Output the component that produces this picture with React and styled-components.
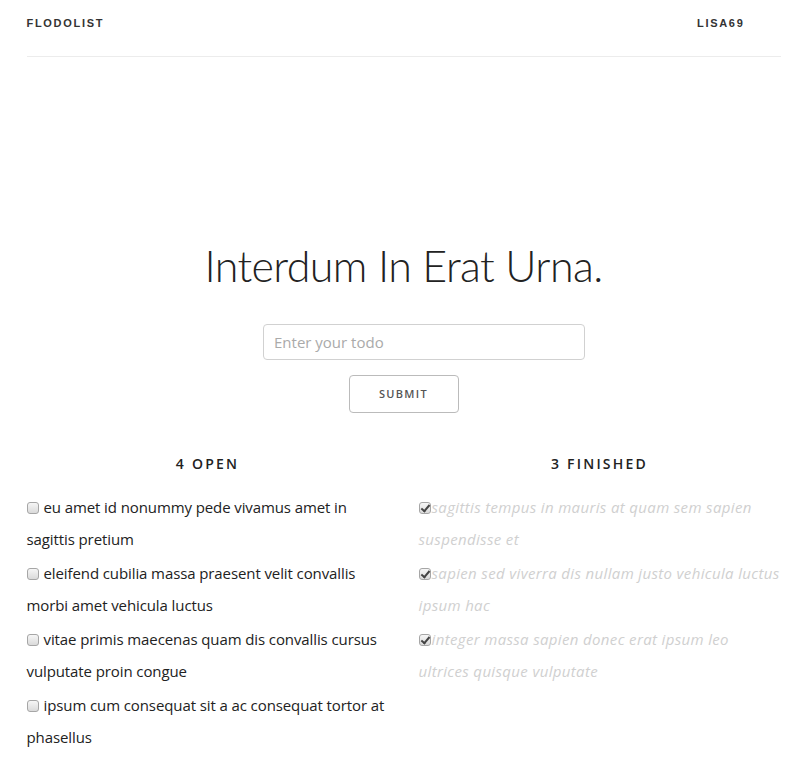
import styled, { createGlobalStyle } from 'styled-components';

const GlobalStyle = createGlobalStyle`
  body {
    margin: 0;
    background: #fff;
    font-family: "Open Sans", Lato, sans-serif;
    color: #222;
  }
`;

const Container = styled.div`
  width: 754px;
  margin: 0 auto;
`;

const Nav = styled.nav`
  display: flex;
  justify-content: space-between;
  box-sizing: border-box;
  height: 57px;
  padding: 17px 36px 0 0;
  border-bottom: 1px solid #ececec;
`;

const NavItem = styled.span`
  font-family: "Liberation Sans", Arial, sans-serif;
  font-size: 11px;
  font-weight: 700;
  letter-spacing: 1.7px;
  text-transform: uppercase;
  color: #333;
`;

const Title = styled.h1`
  margin: 183px 0 32px;
  text-align: center;
  font-family: Lato, sans-serif;
  font-size: 43px;
  font-weight: 300;
  line-height: 1.2;
  letter-spacing: -0.6px;
  color: #222;
`;

const Form = styled.form`
  display: flex;
  flex-direction: column;
  align-items: center;
  gap: 15px;
`;

const Input = styled.input`
  box-sizing: border-box;
  width: 322px;
  height: 36px;
  margin-left: 41px;
  padding: 6px 10px;
  border: 1px solid #d1d1d1;
  border-radius: 4px;
  font-family: inherit;
  font-size: 15px;
  color: #222;
  outline: none;

  &::placeholder {
    color: #aaa;
  }
`;

const Button = styled.button`
  box-sizing: border-box;
  width: 110px;
  height: 38px;
  padding: 0;
  background: transparent;
  border: 1px solid #bbb;
  border-radius: 4px;
  font-family: inherit;
  font-size: 11px;
  font-weight: 600;
  letter-spacing: 1.3px;
  color: #555;
  text-transform: uppercase;
`;

const Columns = styled.div`
  display: grid;
  grid-template-columns: 1fr 1fr;
  column-gap: 30px;
  margin-top: 41px;
`;

const Heading = styled.h5`
  margin: 0 0 18px;
  text-align: center;
  font-size: 14px;
  font-weight: 600;
  letter-spacing: 2.2px;
  text-transform: uppercase;
  color: #222;
`;

const List = styled.ul`
  list-style: none;
  margin: 0;
  padding: 0;
  display: flex;
  flex-direction: column;
  gap: 2px;
`;

const Item = styled.li`
  font-size: 15px;
  line-height: 32px;
  letter-spacing: ${(p) => (p.$done ? '0.35px' : '-0.1px')};
  color: ${(p) => (p.$done ? '#d0d0d0' : '#222')};
  font-style: ${(p) => (p.$done ? 'italic' : 'normal')};
`;

const Check = styled.input.attrs({ type: 'checkbox' })`
  appearance: none;
  box-sizing: border-box;
  width: 12px;
  height: 12px;
  margin: 0 ${(p) => (p.$done ? '1px' : '5px')} 0 0;
  vertical-align: -1px;
  border: 1px solid #a6a6a6;
  border-radius: 3px;
  background: linear-gradient(#f6f6f6, #dadada);
  position: relative;

  &:checked::after {
    content: '';
    position: absolute;
    left: 3px;
    top: 0px;
    width: 3px;
    height: 7px;
    border: solid #444;
    border-width: 0 2px 2px 0;
    transform: rotate(40deg);
  }
`;

const open = [
  'eu amet id nonummy pede vivamus amet in sagittis pretium',
  'eleifend cubilia massa praesent velit convallis morbi amet vehicula luctus',
  'vitae primis maecenas quam dis convallis cursus vulputate proin congue',
  'ipsum cum consequat sit a ac consequat tortor at phasellus',
];

const finished = [
  'sagittis tempus in mauris at quam sem sapien suspendisse et',
  'sapien sed viverra dis nullam justo vehicula luctus ipsum hac',
  'integer massa sapien donec erat ipsum leo ultrices quisque vulputate',
];

export default function App() {
  return (
    <>
      <GlobalStyle />
      <Container>
        <Nav>
          <NavItem>Flodolist</NavItem>
          <NavItem>Lisa69</NavItem>
        </Nav>
        <Title>Interdum In Erat Urna.</Title>
        <Form onSubmit={(e) => e.preventDefault()}>
          <Input placeholder="Enter your todo" />
          <Button type="submit">Submit</Button>
        </Form>
        <Columns>
          <div>
            <Heading>{open.length} Open</Heading>
            <List>
              {open.map((text, i) => (
                <Item key={i}>
                  <Check readOnly />
                  {text}
                </Item>
              ))}
            </List>
          </div>
          <div>
            <Heading>{finished.length} Finished</Heading>
            <List>
              {finished.map((text, i) => (
                <Item key={i} $done>
                  <Check $done checked readOnly />
                  {text}
                </Item>
              ))}
            </List>
          </div>
        </Columns>
      </Container>
    </>
  );
}
